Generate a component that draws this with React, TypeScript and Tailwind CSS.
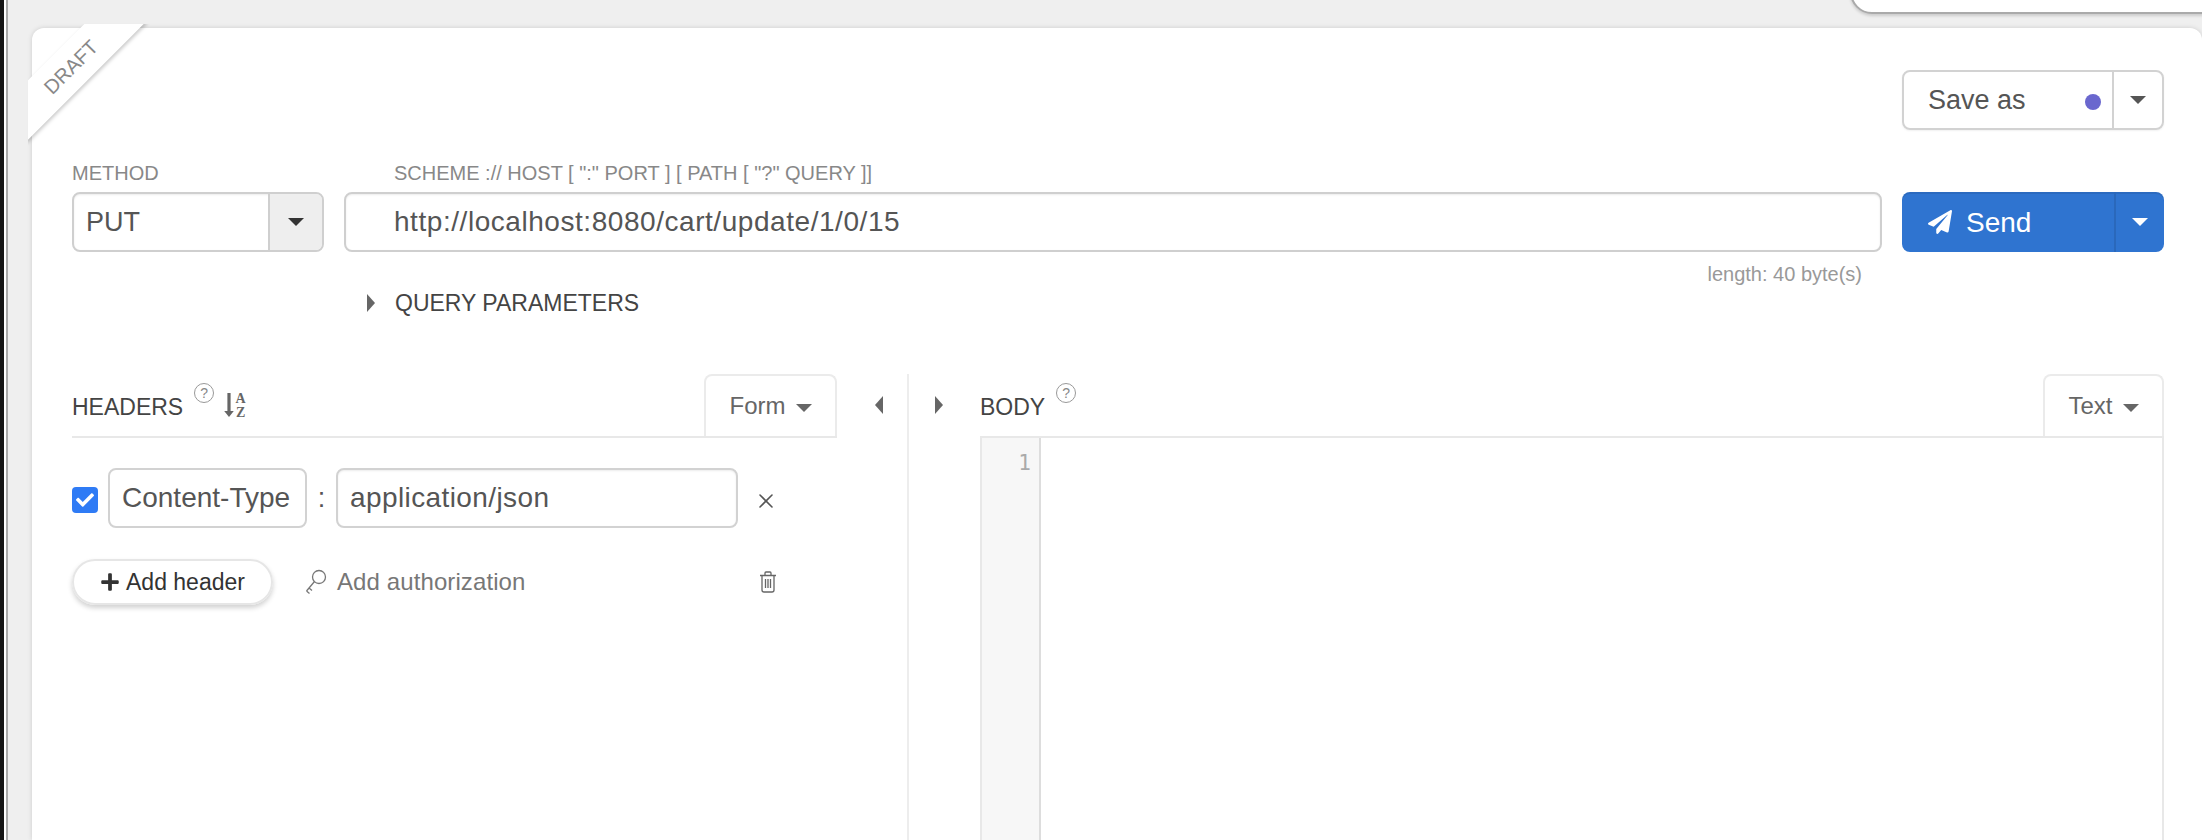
import { FaCheck, FaPaperPlane, FaPlus } from "react-icons/fa";
import { X } from "lucide-react";

function Caret({ className = "" }: { className?: string }) {
  return (
    <span
      className={`inline-block w-0 h-0 border-x-[8px] border-x-transparent border-t-[8px] ${className}`}
    />
  );
}

function SideCaret({ left = false }: { left?: boolean }) {
  return (
    <span
      className={`inline-block w-0 h-0 border-y-[9px] border-y-transparent ${
        left ? "border-r-[8px] border-r-[#666]" : "border-l-[8px] border-l-[#666]"
      }`}
    />
  );
}

function Help({ className = "" }: { className?: string }) {
  return (
    <span
      className={`flex items-center justify-center w-5 h-5 rounded-full border border-[#999] text-[14px] leading-none text-[#888] ${className}`}
    >
      ?
    </span>
  );
}

function Tab({ label }: { label: string }) {
  return (
    <div className="flex items-center justify-center gap-[10px] h-[62px] border-2 border-b-0 border-[#ebebeb] rounded-t-lg text-[24px] text-[#666]">
      {label}
      <Caret className="border-t-[#666] mt-1" />
    </div>
  );
}

export default function App() {
  return (
    <div className="relative flex w-full h-[840px] overflow-hidden bg-[#efefef] text-[#444] font-['Liberation_Sans',Arial,sans-serif]">
      <div className="w-1 bg-[#151515]" />
      <div className="w-0.5 bg-white" />
      <div className="w-0.5 bg-[#aaa]" />

      {/* corner of the popup above the page */}
      <div className="absolute top-[-40px] right-[-20px] w-[372px] h-[54px] bg-white border-2 border-[#aaa] rounded-[22px] shadow-[0_2px_3px_rgba(0,0,0,0.15)]" />

      <div className="flex-1 pl-6 pt-7">
        <div className="relative h-full flex flex-col bg-white rounded-t-xl shadow-[0_0_5px_rgba(0,0,0,0.14)] pl-10 pr-[38px] pt-[42px]">
          {/* draft ribbon */}
          <div className="absolute left-[-4px] top-[-4px] w-[130px] h-[130px] overflow-hidden">
            <div className="absolute left-[-42px] top-[22px] w-[170px] h-[42px] -rotate-45 flex items-center justify-center bg-white shadow-[0_2px_4px_rgba(0,0,0,0.22)] text-[20px] text-[#888]">
              <span>DRAFT</span>
            </div>
          </div>

          <div className="flex justify-end">
            <div className="flex w-[262px] h-[60px] border-2 border-[#d2d2d2] rounded-lg shadow-[0_1px_2px_rgba(0,0,0,0.06)]">
              <div className="flex-1 flex items-center justify-between pl-6 pr-[11px] text-[27px] text-[#555]">
                <span>Save as</span>
                <span className="w-4 h-4 rounded-full bg-[#6a67ce] mt-1" />
              </div>
              <div className="flex items-center justify-center w-[50px] border-l-2 border-[#d2d2d2]">
                <Caret className="border-t-[#555]" />
              </div>
            </div>
          </div>

          <div className="grid grid-cols-[252px_1fr_262px] gap-x-5 mt-[30px]">
            <div>
              <div className="h-[32px] text-[20px] leading-[26px] text-[#888]">METHOD</div>
              <div className="flex h-[60px] border-2 border-[#cfcfcf] rounded-lg overflow-hidden shadow-[inset_0_1px_2px_rgba(0,0,0,0.08)]">
                <div className="flex-1 flex items-center pl-3 text-[27px] text-[#555]">PUT</div>
                <div className="flex items-center justify-center w-[54px] bg-[#eeeeee] border-l-2 border-[#cfcfcf]">
                  <Caret className="border-t-[#333]" />
                </div>
              </div>
            </div>

            <div>
              <div className="h-[32px] pl-[50px] text-[20px] leading-[26px] text-[#888]">
                SCHEME :// HOST [ ":" PORT ] [ PATH [ "?" QUERY ]]
              </div>
              <div className="flex items-center h-[60px] pl-[48px] border-2 border-[#cfcfcf] rounded-lg shadow-[inset_0_1px_2px_rgba(0,0,0,0.08)] text-[28px] tracking-[0.55px] text-[#555]">
                http://localhost:8080/cart/update/1/0/15
              </div>
              <div className="flex justify-end pr-5 mt-[10px] h-6 text-[20px] leading-6 text-[#999]">
                length: 40 byte(s)
              </div>
              <div className="flex items-center gap-5 mt-[3px] pl-[23px] text-[23px] leading-7 text-[#444]">
                <SideCaret />
                QUERY PARAMETERS
              </div>
            </div>

            <div className="flex h-[60px] mt-[32px] bg-[#2f74d0] rounded-lg text-white shadow-[inset_0_2px_0_rgba(0,0,0,0.08)]">
              <div className="flex-1 flex items-center gap-[14px] pl-[26px] text-[28px]">
                <FaPaperPlane className="w-6 h-6" />
                <span className="mt-px">Send</span>
              </div>
              <div className="flex items-center justify-center w-[50px] border-l-2 border-[#2a68bb]">
                <Caret className="border-t-white" />
              </div>
            </div>
          </div>

          <div className="flex flex-1 mt-[57px] min-h-0">
            {/* headers pane */}
            <div className="w-[765px] shrink-0">
              <div className="flex items-end justify-between h-[64px] border-b-2 border-[#e8e8e8]">
                <div className="flex items-start h-full pt-[5px] text-[23px] text-[#444]">
                  <span className="mt-[11px]">HEADERS</span>
                  <Help className="ml-[11px] mt-[4px]" />
                  <svg viewBox="0 0 24 30" className="w-6 h-[30px] ml-[10px] mt-[13px] text-[#666] overflow-visible" fill="currentColor">
                    <path d="M3.4 1h3.2v18h3.2L5 25 .2 19h3.2z" />
                    <text x="11.5" y="11" fontSize="14" fontWeight="700" fontFamily="'Liberation Serif', serif">A</text>
                    <text x="12" y="25" fontSize="14" fontWeight="700" fontFamily="'Liberation Serif', serif">Z</text>
                  </svg>
                </div>
                <div className="w-[133px]">
                  <Tab label="Form" />
                </div>
              </div>

              <div className="flex items-center h-[60px] mt-[30px]">
                <span className="flex items-center justify-center w-[26px] h-[26px] rounded-[4px] bg-[#2f7bf5] mt-1">
                  <FaCheck className="w-[18px] h-[18px] text-white" />
                </span>
                <div className="flex items-center w-[199px] h-full ml-[10px] pl-3 border-2 border-[#d2d2d2] rounded-lg text-[28px] text-[#555] whitespace-nowrap">
                  Content-Type
                </div>
                <span className="w-[29px] text-center text-[27px] text-[#555]">:</span>
                <div className="flex items-center w-[402px] h-full pl-3 border-2 border-[#d2d2d2] rounded-lg shadow-[inset_0_1px_2px_rgba(0,0,0,0.08)] text-[28px] tracking-[0.4px] text-[#555]">
                  application/json
                </div>
                <X className="w-6 h-6 ml-[16px] mt-[6px] text-[#555]" strokeWidth={1.6} />
              </div>

              <div className="flex items-center h-[46px] mt-[31px]">
                <div className="flex items-center gap-[6px] w-[201px] h-full pl-[26px] border-2 border-[#e6e6e6] rounded-full shadow-[0_3px_5px_rgba(0,0,0,0.18)] text-[23px] text-[#333]">
                  <FaPlus className="w-5 h-5" />
                  Add header
                </div>
                <svg viewBox="0 0 22 26" className="w-[22px] h-[26px] ml-8 text-[#777]" fill="none" stroke="currentColor" strokeWidth="1.3">
                  <circle cx="14" cy="8" r="6.5" />
                  <path d="M9.5 12.5 1.5 22M4 19l3 2.5M1.5 22l3 2.5" />
                </svg>
                <span className="ml-[10px] text-[24px] tracking-[0.1px] text-[#777]">Add authorization</span>
                <svg viewBox="0 0 18 22" className="w-[18px] h-[22px] ml-auto mr-[60px] text-[#666]" fill="none" stroke="currentColor" strokeWidth="1.3">
                  <path d="M1 4.5h16M6 4.5V2a1 1 0 0 1 1-1h4a1 1 0 0 1 1 1v2.5" />
                  <path d="M3 4.5V19a2 2 0 0 0 2 2h8a2 2 0 0 0 2-2V4.5" />
                  <path d="M6.5 8v9M9 8v9M11.5 8v9" />
                </svg>
              </div>
            </div>

            {/* collapse arrows */}
            <div className="flex items-start w-[143px] shrink-0 h-full">
              <div className="flex justify-center w-[72px] pl-[14px] pt-[22px] h-full border-r-2 border-[#ededed]">
                <SideCaret left />
              </div>
              <div className="flex justify-center w-[59px] pt-[22px]">
                <SideCaret />
              </div>
            </div>

            {/* body pane */}
            <div className="flex flex-col flex-1 min-w-0">
              <div className="flex items-end justify-between h-[64px] border-b-2 border-[#e8e8e8]">
                <div className="flex items-start h-full pt-[5px] text-[23px] text-[#444]">
                  <span className="mt-[11px]">BODY</span>
                  <Help className="ml-[11px] mt-[4px]" />
                </div>
                <div className="w-[121px]">
                  <Tab label="Text" />
                </div>
              </div>
              <div className="flex-1 flex border-x-2 border-[#e8e8e8]">
                <div className="w-[59px] bg-[#f7f7f7] border-r-2 border-[#dddddd] pr-[8px] pt-[10px] text-right font-['DejaVu_Sans_Mono',monospace] text-[21px] text-[#aaa]">
                  1
                </div>
              </div>
            </div>
          </div>
        </div>
      </div>
    </div>
  );
}
